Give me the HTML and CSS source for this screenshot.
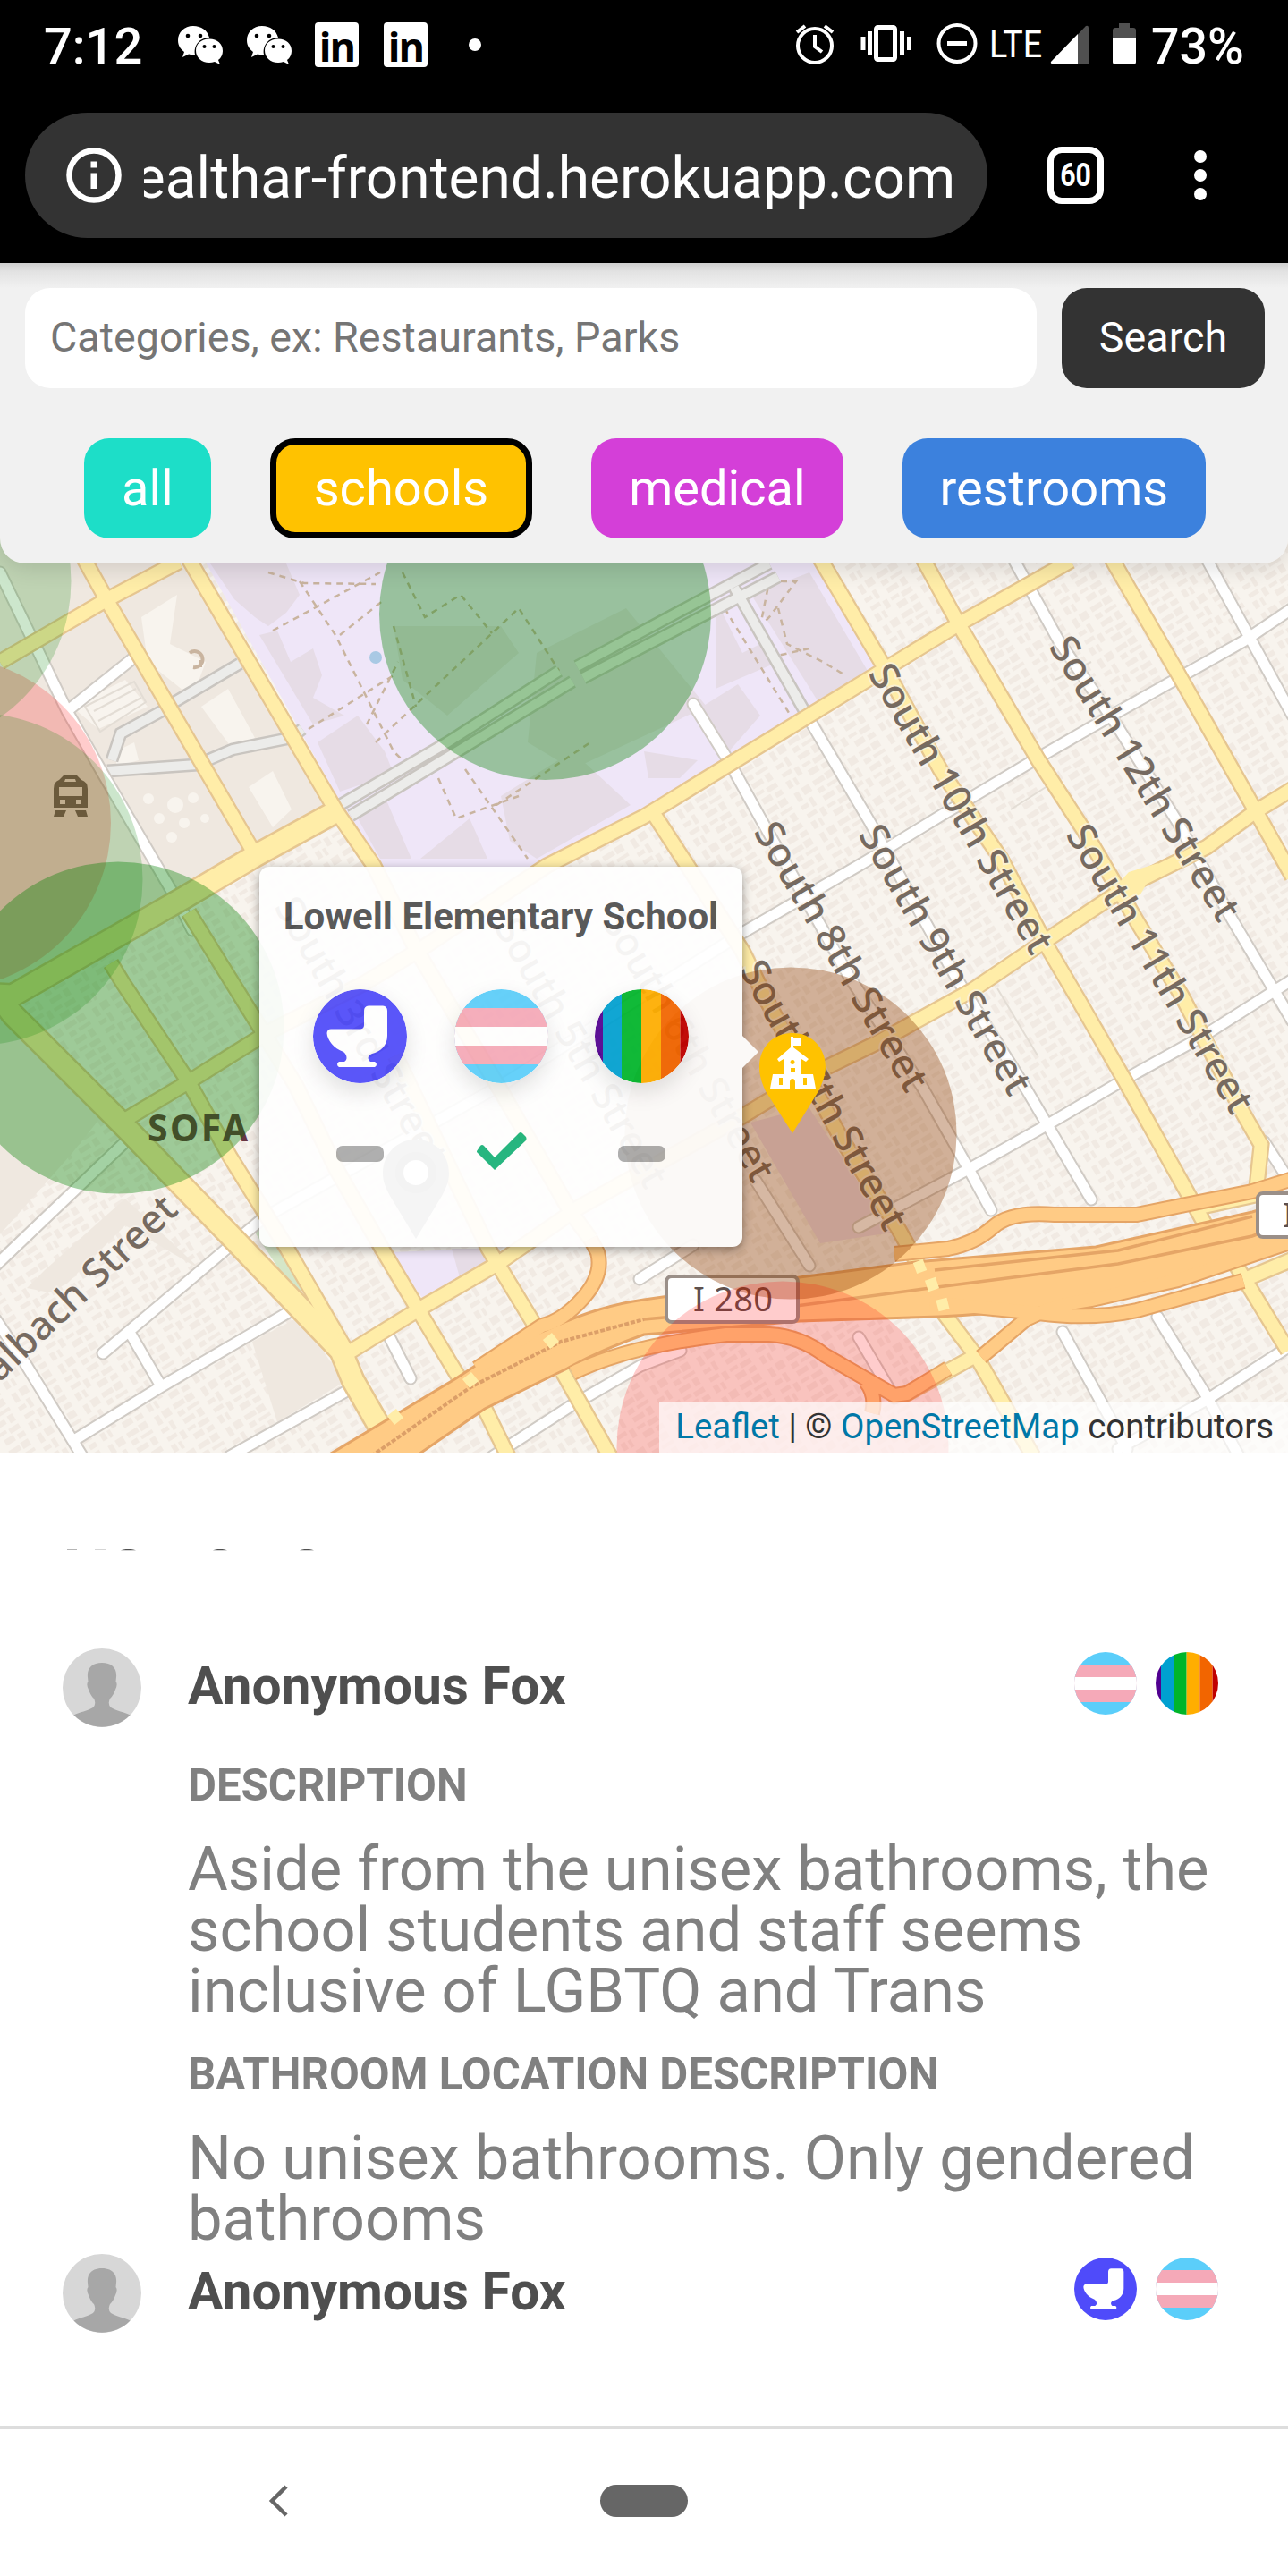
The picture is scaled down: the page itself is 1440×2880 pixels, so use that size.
FILE: index.html
```html
<!DOCTYPE html>
<html lang="en">
<head>
<meta charset="utf-8">
<title>Map of inclusive places</title>
<link rel="stylesheet" href="styles.css">
</head>
<body>
<svg class="defs" width="0" height="0" aria-hidden="true">
  <defs>
    <clipPath id="disc"><circle cx="52.5" cy="52.5" r="52.5"/></clipPath>
    <symbol id="toilet" viewBox="0 0 105 105">
      <circle cx="52.5" cy="52.5" r="52.5" fill="#4f4bfa"/>
      <path fill="#fff" d="M62 18.500H78Q83 19 83 24V52C83 63 75 70 66 72C60 74 61 79 64 81H69Q71 82 71 84T69 87H29Q27 86 27 84T29 81H35C39 79 38 73 34 70C23 66 16 57 15.500 49Q16 44.500 20 44.500H53Q57 44 57 40V24Q57 19 62 18.500Z"/>
    </symbol>
    <symbol id="trans" viewBox="0 0 105 105">
      <g clip-path="url(#disc)"><path fill="#5bcefa" d="M0 0H105V105H0Z"/><path fill="#f5a9b8" d="M0 21H105V84H0Z"/><path fill="#fff" d="M0 42H105V63H0Z"/></g>
    </symbol>
    <symbol id="rainbow" viewBox="0 0 105 105">
      <g clip-path="url(#disc)"><path fill="#510090" d="M0 0H9V105H0Z"/><path fill="#00a0d0" d="M9 0H30V105H9Z"/><path fill="#00b52a" d="M30 0H52V105H30Z"/><path fill="#ffae00" d="M52 0H74V105H52Z"/><path fill="#f26500" d="M74 0H95.500V105H74Z"/><path fill="#c00000" d="M95.500 0H105V105H95.500Z"/></g>
    </symbol>
    <symbol id="person" viewBox="0 0 88 88">
      <circle cx="44" cy="44" r="44" fill="#d7d7d7"/>
      <path fill="#a7a7a7" d="M44 16C55 16 61 22 60 32L59.500 37Q62 40 59 46C57 51 56 53 53 56Q50 62 54 66C60 70 69 71 75.500 74.500A44 44 0 0 1 12.500 74.500C19 71 28 70 34 66Q38 62 35 56C32 53 31 51 29 46Q26 40 28.500 37L28 32C27 22 33 16 44 16Z"/>
    </symbol>
    <symbol id="wechat" viewBox="0 0 52 44">
      <path fill="#fff" d="M18 1C8 1 1 8 1 17C1 23 4 27 8 30L6 36L13 32.500Q16 33.500 20 33C18 22 26 14 36 14C34 6 27 1 18 1Z"/>
      <path fill="#fff" d="M36 15.500C27 15.500 21 21 21 28.500S27 42 36 42Q39 42 42 41L48 44L46 39C49 37 51 33 51 29C51 21 45 15.500 36 15.500Z"/>
      <g fill="#000"><circle cx="12" cy="12" r="2.300"/><circle cx="26" cy="12" r="2.300"/><circle cx="30.500" cy="24" r="2"/><circle cx="41.500" cy="24" r="2"/></g>
    </symbol>
  </defs>
</svg>

<header class="status">
  <div class="status-left">
    <span class="clock">7:12</span>
    <svg class="wechat" width="52" height="44"><use href="#wechat"/></svg>
    <svg class="wechat" width="52" height="44"><use href="#wechat"/></svg>
    <span class="linkedin">in</span>
    <span class="linkedin">in</span>
    <span class="dot"></span>
  </div>
  <svg class="status-right" viewBox="880 0 560 98" width="560" height="98">
    <g fill="none" stroke="#fff" stroke-width="4">
      <circle cx="911" cy="51" r="19"/><path d="M911 39V52L919 58M891 36L900 29M931 36L922 29"/>
      <rect x="979.500" y="30.500" width="21" height="36" rx="2" stroke-width="5"/>
      <path d="M972.500 35V62M1008.500 35V62M965 41V56M1016.500 41V56" stroke-width="5"/>
      <circle cx="1070" cy="48.500" r="20.500"/><path d="M1059 48.500H1081" stroke-width="5"/>
    </g>
    <text x="1106" y="64" class="lte" textLength="59" lengthAdjust="spacingAndGlyphs">LTE</text>
    <path fill="#505050" d="M1175 70L1214 29Q1217 28 1217 31V71H1177Z"/>
    <path fill="#fff" d="M1175 69L1205 38V71H1177Q1174 71 1175 69Z"/>
    <path fill="#505050" d="M1251 26H1263V31H1267Q1270 31 1270 34V43H1244V34Q1244 31 1247 31H1251Z"/>
    <path fill="#fff" d="M1244 42H1270V69Q1270 72 1267 72H1247Q1244 72 1244 69Z"/>
    <text x="1287" y="71" class="percent" textLength="104" lengthAdjust="spacingAndGlyphs">73%</text>
  </svg>
</header>

<nav class="toolbar">
  <div class="address">
    <svg width="62" height="62" viewBox="0 0 62 62"><circle cx="31" cy="31" r="27.500" fill="none" stroke="#fff" stroke-width="6.500"/><path fill="#fff" d="M27.500 15.500H34.500V22.500H27.500ZM27.500 28.500H34.500V46H27.500Z"/></svg>
    <div class="url"><span>ealthar-frontend.herokuapp.com</span></div>
  </div>
  <div class="tabs"><span>60</span></div>
  <div class="more"><i></i><i></i><i></i></div>
</nav>

<main class="stage">
  <svg class="map" viewBox="0 294 1440 1330" width="1440" height="1330">
    <defs>
      <pattern id="houses" width="61" height="53" patternUnits="userSpaceOnUse" patternTransform="rotate(-32)">
        <path fill="#f1eae3" d="M2 3H16V9H2ZM18 2H28V10H18ZM2 13H10V19H2ZM14 14H29V18H14ZM3 23H17V29H3ZM21 22H28V31H21ZM2 34H12V38H2ZM15 35H28V41H15ZM4 43H16V50H4ZM20 45H29V51H20ZM38 4H44V15H38ZM48 3H58V12H48ZM37 20H46V25H37ZM49 17H54V28H49ZM38 31H50V36H38ZM53 33H59V43H53ZM37 41H43V50H37ZM46 42H50V51H46Z"/>
      </pattern>
      <g id="yellow" fill="none">
        <path d="M94 625L120 672L282 950M211 625L376 907L418 968L466 1063L562 1223L638 1355L660 1385M0 740L120 670L200 628"/>
        <path d="M138 1253L207 1212L298 1155L406 1100L472 1060L611 968L720 913L986 750L1073 697L1197 627"/>
        <path d="M124 1077L138 1100L211 1210L257 1293L321 1396L390 1515M211 1020L271 1117L331 1214L376 1307L427 1396L468 1465L519 1550"/>
        <path d="M442 1180L546 1396L606 1495M390 1512L473 1461L556 1413L647 1350L830 1248L904 1203L982 1165L1087 1107L1161 1057L1262 990L1349 947L1404 907L1445 882"/>
        <path d="M917 625L991 750L1051 860L1119 960L1170 1057L1207 1120L1257 1207L1349 1372M1381 1413L1440 1510"/>
        <path d="M1032 625L1073 700L1161 850L1211 927L1271 1030L1321 1113L1390 1245L1410 1280L1404 1336L1340 1350M1243 625L1317 753L1404 907L1445 980"/>
        <path d="M729 907L770 970L830 1063L858 1120L940 1272L1005 1375L1030 1420M1055 1468L1092 1517L1155 1628M1014 1558L1092 1515M629 1534L682 1628M542 1575L568 1628M1445 1408L1390 1431"/>
      </g>
      <g id="wide" fill="none"><path d="M-5 1112L14 1113L207 1003L285 957L380 905M0 1115L14 1134L138 1258L262 1386L381 1510L395 1544L443 1628"/></g>
      <g id="white" fill="none">
        <path d="M775 787L816 853L853 920L950 1093L1032 1217L1083 1307L1108 1353M904 803L973 920L1069 1093L1147 1217L1220 1341M1133 625L1184 717L1248 810L1317 920L1377 1027L1445 1142M1349 625L1445 800"/>
        <path d="M1445 680L1390 717L1248 797L1161 847L1055 910L968 963L830 1043L566 1210L294 1362L257 1393L115 1513M-5 1415L147 1270M147 1493L179 1548M83 1610L179 1551L326 1465M257 1628L395 1551M-5 1475L28 1524L92 1628M436 1496L459 1541M551 1628L638 1572L716 1527L761 1510M715 1430L775 1392"/>
        <path d="M960 1372L1000 1351L1083 1307L1170 1258L1257 1207L1344 1159L1445 1095M1188 1489L1260 1620M1294 1472L1349 1561L1385 1628M1445 1503L1349 1565L1250 1620M1413 1276L1440 1318M960 1495L1000 1563M845 1320L905 1415"/>
        <path d="M0 640L75 795L115 865L200 1010L215 1040M75 795L150 735"/>
      </g>
      <g id="grey" fill="none"><path d="M821 657L904 803M380 900L500 830L625 750M392 912L520 835L640 762M645 745L860 630M652 758L870 645M195 785L268 742M125 850L135 820L190 790M120 862L220 855L260 838L325 825L338 815"/></g>
      <g id="ramps" fill="none">
        <path d="M660 1385L668 1400Q675 1425 652 1451T606 1482L533 1530M1000 1402L1060 1396Q1090 1390 1110 1372T1179 1358H1271L1340 1344L1400 1332L1445 1318M1040 1456L1161 1468Q1220 1476 1271 1465L1390 1432M1097 1517L1147 1475Q1180 1458 1220 1453L1317 1431L1445 1388"/>
        <path d="M640 1535Q700 1505 812 1492H860Q895 1494 922 1515L1000 1560L1014 1558L1060 1530M968 1545Q980 1560 975 1580"/>
      </g>
    </defs>
    <rect y="294" width="1440" height="1330" fill="#f8f4ee"/>
    <rect y="294" width="1440" height="1330" fill="url(#houses)"/>
    <path fill="#efe8e0" d="M0 600H205L372 900L285 950L207 1003L0 1110ZM0 1120L120 1240L80 1290L0 1380ZM225 1420L140 1340L50 1420L30 1440L55 1445L75 1435L140 1370ZM282 1500L335 1472L385 1545L310 1590Z"/>
    <path fill="#f8f4ee" d="M158 690L198 665L190 720L230 740L215 780L165 740ZM225 790L255 770L285 825L262 840ZM278 880L305 862L326 905L305 925ZM80 790L140 760L165 790L110 815ZM130 840L150 830L155 850L130 857Z"/>
    <g fill="none" stroke="#e3ddd5" stroke-width="2"><path d="M95 790L150 762L163 785L112 818ZM105 795L152 770M110 806L158 780M1180 760L1220 740M1130 905L1185 870M1115 1105L1160 1180"/></g>
    <g fill="#f8f4ee"><circle cx="166" cy="893" r="6"/><circle cx="196" cy="900" r="9"/><circle cx="216" cy="892" r="6"/><circle cx="178" cy="915" r="6"/><circle cx="206" cy="920" r="6"/><circle cx="192" cy="936" r="6"/><circle cx="229" cy="915" r="5"/></g>
    <path fill="#efe6f8" d="M225 620L385 905L425 975H600L725 902L985 742L915 620ZM435 1400L545 1396L550 1410L475 1455Z"/>
    <path fill="#e6dce6" d="M235 630H320L335 665L320 685L300 700L285 690L262 670ZM290 710L310 705L325 740L350 725L360 755L350 780L385 800L350 810ZM355 830L400 800L430 840L440 865L380 885ZM440 700H560L580 730L500 800L450 760ZM600 730L700 680L790 790L640 860L590 830ZM560 890L640 840L705 900L600 960L570 940ZM400 915L430 890L460 960H425ZM800 670L830 730L850 720L870 740L800 770ZM840 665L905 640L970 750L915 785ZM785 790L825 765L850 800L815 840ZM720 840L780 850L760 870H725ZM470 960L525 915L545 960ZM505 1396H545L550 1410L515 1432Z"/>
    <path fill="#eadce8" d="M839 1255L904 1238L997 1378L917 1390Z"/>
    <path fill="none" stroke="#c9b49f" stroke-width="2.500" stroke-dasharray="7 6" d="M300 640L340 652L420 653M335 650L375 710L440 840L450 850M305 705L425 640M380 710L430 670M345 815L440 755M410 810L445 740M450 640L475 690L515 665L550 708M440 700L465 790M420 830L580 680L625 750M520 860L590 960M555 900L660 830M490 870L510 915L580 890M860 650L890 650L860 690L850 700ZM870 680L880 720L920 740L945 755M810 680L890 810M860 735L905 725"/>
    <circle cx="420" cy="735" r="7" fill="#a9c9e4"/>
    <path fill="none" stroke="#c9b49f" stroke-width="4" d="M212 730A9 9 0 1 1 216 746M224 738V746"/>
    <path fill="#d5e6c8" d="M280 1370L345 1470L322 1395L292 1360Z"/>

    <use href="#grey" stroke="#c9c5c0" stroke-width="15"/><use href="#grey" stroke="#ececea" stroke-width="10"/>
    <use href="#white" stroke="#d0cbc5" stroke-width="15" stroke-linecap="round"/><use href="#white" stroke="#fff" stroke-width="11" stroke-linecap="round"/>
    <use href="#yellow" stroke="#e6c690" stroke-width="19"/><use href="#wide" stroke="#e6c690" stroke-width="28"/>
    <use href="#yellow" stroke="#ffeda8" stroke-width="14.500"/><use href="#wide" stroke="#ffeda8" stroke-width="23"/>
    <path fill="#ffeda8" d="M1250 988L1262 975L1295 965L1275 1000L1258 1006Z"/>
    <use href="#ramps" stroke="#e5a566" stroke-width="18"/>
    <path fill="#ffcb85" stroke="#e5a566" stroke-width="3" d="M365 1628L510 1541L560 1508L620 1483Q670 1460 720 1453L894 1428L1023 1411L1225 1394L1400 1355L1445 1341V1385L1271 1444Q1170 1466 1050 1472L894 1477L720 1492Q670 1510 634 1530L542 1575L465 1628Z"/>
    <use href="#ramps" stroke="#ffcb85" stroke-width="14"/>
    <path fill="none" stroke="#dc9f68" stroke-width="4" stroke-dasharray="5 2" d="M415 1628L526 1551L627 1500L720 1475"/>
    <path fill="none" stroke="#e5a566" stroke-width="3.500" d="M720 1475L890 1460L1040 1440L1250 1413L1400 1382L1445 1365M1045 1420L1250 1398L1400 1360"/>
    <path stroke="#ffeda8" stroke-width="13" d="M437 1588L447 1580M521 1547L531 1539M611 1503L621 1495M1023 1418L1034 1414M1036 1438L1048 1434M1048 1460L1060 1457"/>

    <g class="street">
      <text transform="translate(970 753) rotate(59.900)" textLength="366">South 10th Street</text>
      <text transform="translate(842 930) rotate(59.700)" textLength="340">South 8th Street</text>
      <text transform="translate(959 933) rotate(60)" textLength="340">South 9th Street</text>
      <text transform="translate(1191 933) rotate(59.400)" textLength="366">South 11th Street</text>
      <text transform="translate(1172 723) rotate(58.400)" textLength="364">South 12th Street</text>
      <text transform="translate(826 1084) rotate(61)" textLength="337">South 7th Street</text>
      <text transform="translate(672 1030) rotate(60)" textLength="340">South 6th Street</text>
      <text transform="translate(552 1037) rotate(60)" textLength="340">South 5th Street</text>
      <text transform="translate(306 1014) rotate(60)" textLength="340">South 3rd Street</text>
      <text transform="translate(201 1355) rotate(-43.500)" text-anchor="end" textLength="307">Balbach Street</text>
    </g>
    <text x="165" y="1276" class="place" textLength="112">SOFA</text>
    <g stroke="#9a8f88" stroke-width="4" fill="#fff"><rect x="745" y="1427" width="147" height="51" rx="6"/><rect x="1406" y="1334" width="60" height="49" rx="6"/></g>
    <text x="775" y="1466" class="shield" textLength="89">I 280</text><text x="1434" y="1372" class="shield">I</text>

    <circle cx="-61.500" cy="920" r="185.500" fill="#f00" fill-opacity=".2"/>
    <g fill="#008000" fill-opacity=".2">
      <circle cx="-106" cy="650" r="185.500"/><circle cx="-26" cy="983" r="185.500"/><circle cx="884" cy="1267" r="185.500"/>
    </g>
    <g fill="#008000" fill-opacity=".36"><circle cx="609.500" cy="686.500" r="185.500"/><circle cx="132" cy="1149" r="185.500"/></g>
    <g fill="#f00" fill-opacity=".2"><circle cx="884" cy="1267" r="185.500"/><circle cx="875" cy="1618" r="185.500"/></g>
    <path fill="#6b5a3c" fill-rule="evenodd" d="M71 867H86L91 872Q98 874 98 882V903H60V882Q60 874 66 872ZM73 871L72 874H85L84 871ZM66 880V890H92V880ZM67 894V899H73V894ZM85 894V899H91V894ZM62 906H74L71 913H60ZM84 906H96L98 913H87Z"/>

    <path fill="#777" d="M465 1274C444 1274 428 1290 428 1312C428 1322 432 1329 436 1337L465 1385L494 1337C498 1329 502 1322 502 1312C502 1290 486 1274 465 1274Z"/>
    <circle cx="465" cy="1311" r="18.500" fill="#fff" stroke="#555" stroke-width="9"/>

    <path fill="#ffc200" d="M886 1155C864 1155 849 1171 849 1193C849 1203 852 1211 856 1220L886 1267L915 1220C919 1211 923 1203 923 1193C923 1171 907 1155 886 1155Z"/>
    <path fill="#fff" fill-rule="evenodd" d="M884 1159H887V1161H895V1169H887V1171L904 1184L901 1187L896 1184V1201H909L912 1217H861L864 1201H876V1184L871 1187L869 1184L884 1171ZM886 1185A2.500 2.500 0 1 0 886.100 1185ZM884 1194V1198H889V1194ZM871 1205V1213H875V1205ZM898 1205V1213H902V1205ZM883 1217H889V1210Q889 1206 886 1206T883 1210Z"/>
  </svg>

  <section class="search">
    <div class="search-row">
      <input class="field" type="text" placeholder="Categories, ex: Restaurants, Parks">
      <button class="go">Search</button>
    </div>
    <div class="chips">
      <button class="chip teal">all</button>
      <button class="chip amber">schools</button>
      <button class="chip magenta">medical</button>
      <button class="chip blue">restrooms</button>
    </div>
  </section>

  <aside class="popup">
    <h2>Lowell Elementary School</h2>
    <div class="ratings">
      <svg class="badge" viewBox="0 0 105 105"><use href="#toilet"/></svg>
      <svg class="badge" viewBox="0 0 105 105"><use href="#trans"/></svg>
      <svg class="badge" viewBox="0 0 105 105"><use href="#rainbow"/></svg>
      <span class="dash"></span>
      <svg class="check" width="57" height="43" viewBox="0 0 57 43"><path fill="#18b278" d="M1 22L5 16Q7 14 9 16L21 29L48 2Q50 0 52 2L56 6Q57 8 56 10L21 43L1 23Z"/></svg>
      <span class="dash"></span>
    </div>
  </aside>
  <div class="credit"><a>Leaflet</a> | © <a>OpenStreetMap</a> contributors</div>
</main>

<section class="reviews">
  <svg class="clipped" width="290" height="2" viewBox="0 0 290 2"><path fill="#b5b5b5" d="M5 0H16V1H5Z"/><path fill="#d5d5d5" d="M36 0H48V1H36Z"/><path fill="#505050" d="M65 1.200Q73.500 -1.500 82 1.200ZM168 1.200Q176 -1.500 184 1.200ZM265 1.200Q273 -1.500 281 1.200Z"/></svg>
  <article class="review">
    <svg class="avatar" viewBox="0 0 88 88"><use href="#person"/></svg>
    <div class="body">
      <div class="head"><h3>Anonymous Fox</h3><div class="tags"><svg viewBox="0 0 105 105"><use href="#trans"/></svg><svg viewBox="0 0 105 105"><use href="#rainbow"/></svg></div></div>
      <h4>DESCRIPTION</h4>
      <p>Aside from the unisex bathrooms, the school students and staff seems inclusive of LGBTQ and Trans</p>
      <h4 class="next">BATHROOM LOCATION DESCRIPTION</h4>
      <p>No unisex bathrooms. Only gendered bathrooms</p>
    </div>
  </article>
  <article class="review">
    <svg class="avatar" viewBox="0 0 88 88"><use href="#person"/></svg>
    <div class="body">
      <div class="head"><h3>Anonymous Fox</h3><div class="tags"><svg viewBox="0 0 105 105"><use href="#toilet"/></svg><svg viewBox="0 0 105 105"><use href="#trans"/></svg></div></div>
    </div>
  </article>
</section>

<footer class="navbar">
  <svg width="24" height="36" viewBox="0 0 24 36"><path fill="none" stroke="#666" stroke-width="4.500" d="M21 2L5 18L21 34"/></svg>
  <span class="home"></span>
</footer>
</body>
</html>
```
FILE: styles.css
```css
* { box-sizing: border-box; }
body { margin: 0; width: 1440px; height: 2880px; overflow: hidden; display: flex; flex-direction: column; background: #fff; font-family: Roboto, "Liberation Sans", sans-serif; }
h2, h3, h4, p { margin: 0; }
svg { display: block; flex: none; }
.defs { position: absolute; }

.status { height: 98px; flex: none; display: flex; justify-content: space-between; background: #000; color: #fff; }
.status-left { display: flex; align-items: center; padding-left: 49px; height: 100px; }
.clock { font-size: 56px; font-weight: 500; width: 149px; line-height: 60px; padding-top: 3px; }
.wechat { margin-right: 25px; }
.linkedin { width: 49px; height: 50px; margin-right: 28px; border-radius: 4px; background: #fff; color: #000; font: 700 45px/54px "Open Sans", sans-serif; letter-spacing: -2px; text-align: center; }
.dot { width: 14px; height: 14px; margin-left: 18px; border-radius: 50%; background: #fff; }
.lte { font: 400 43px Roboto, sans-serif; fill: #fff; }
.percent { font: 500 56px Roboto, sans-serif; fill: #fff; }

.toolbar { height: 196px; flex: none; display: flex; align-items: center; padding: 0 91px 0 28px; background: #000; }
.address { width: 1076px; height: 140px; display: flex; align-items: center; padding-left: 46px; border-radius: 70px; background: #333; }
.url { width: 907px; margin-left: 25px; overflow: hidden; display: flex; justify-content: flex-end; color: #fff; font-size: 64px; line-height: 90px; white-space: nowrap; padding-top: 8px; }
.tabs { width: 63px; height: 64px; margin-left: 67px; border: 7px solid #fff; border-radius: 16px; color: #fff; font: 700 36px/51px Roboto, sans-serif; text-align: center; }
.tabs span { display: block; transform: scaleX(.84); }
.more { margin-left: auto; display: grid; gap: 7px; }
.more i { width: 14px; height: 14px; border-radius: 50%; background: #fff; }

.stage { position: relative; height: 1330px; flex: none; overflow: hidden; }
.search { position: absolute; inset: 0 0 auto; height: 336px; padding: 28px 26px 28px 28px; border-radius: 0 0 28px 28px; background: linear-gradient(#cfcfcf, #e2e2e2 9px, #f1f1f1 28px); box-shadow: 0 4px 28px rgba(0, 0, 0, .14); }
.search-row { display: flex; gap: 28px; height: 112px; }
.field { flex: 1; border: 0; border-radius: 28px; padding: 0 28px 2px; font: 46.67px Roboto, sans-serif; background: #fff; }
.field::placeholder { color: #757575; }
.go { width: 227px; border: 0; border-radius: 28px; padding-bottom: 3px; background: #333; color: #fff; font: 46.67px Roboto, sans-serif; }
.chips { display: flex; gap: 66px; margin: 56px 0 0 66px; }
.chip { height: 112px; padding: 0 42px; border: 0; border-radius: 28px; color: #fff; font: 56px Roboto, sans-serif; }
.teal { background: #1ddec8; }
.amber { background: #ffc200; border: 7px solid #000; }
.magenta { background: #d43fd8; }
.blue { background: #3c81dd; }

.popup { position: absolute; left: 290px; top: 675px; width: 540px; height: 425px; border-radius: 11px; background: #fff; opacity: .93; box-shadow: 0 3px 11px rgba(0, 0, 0, .4); }
.popup::after { content: ""; position: absolute; left: 100%; top: 189px; border: 18px solid transparent; border-left-color: #fff; border-right: 0; }
.popup h2 { margin-top: 31px; color: #4f4f4f; font-size: 42px; line-height: 50px; text-align: center; white-space: nowrap; }
.ratings { display: grid; grid-template-columns: repeat(3, 105px); justify-content: center; column-gap: 52.5px; row-gap: 54px; margin-top: 56px; align-items: center; justify-items: center; }
.badge { width: 105px; height: 105px; border-radius: 50%; box-shadow: 0 10px 24px rgba(0, 0, 0, .13); }
.dash { width: 53px; height: 18px; margin-top: 7px; border-radius: 7px; background: #aaa; }
.credit { position: absolute; right: 0; bottom: 0; height: 57px; padding: 0 16px 0 18px; background: rgba(255, 255, 255, .7); color: #333; font-size: 38.4px; line-height: 56px; white-space: nowrap; }
.credit a { color: #0078a8; }
.street { font: 500 44px "Noto Sans", sans-serif; fill: #766a60; paint-order: stroke; stroke: rgba(248, 244, 238, .6); stroke-width: 4px; }
.place { font: 700 41px "Noto Sans", sans-serif; fill: #683541; }
.shield { font: 38px "Noto Sans", sans-serif; fill: #5e504d; }

.reviews { height: 1088px; flex: none; padding: 108px 78px 0 70px; }
.clipped { margin-bottom: 109px; }
.review { display: flex; gap: 52px; }
.review + .review { margin-top: 5px; }
.avatar { width: 88px; height: 88px; }
.body { flex: 1; }
.head { display: flex; justify-content: space-between; height: 88px; }
.head h3 { color: #4f4f4f; font-size: 58.7px; line-height: 85px; }
.tags { display: flex; gap: 21px; padding-top: 4px; }
.tags svg { width: 70px; height: 70px; }
.body h4 { margin: 33px 0 28px; color: #808080; font-size: 49.1px; line-height: 64px; white-space: nowrap; }
.body .next { margin: 26px 0 28px; }
.body p { color: #808080; font-size: 68.7px; line-height: 68.200px; }

.navbar { height: 168px; flex: none; border-top: 4px solid #ddd; display: flex; align-items: center; padding: 0 0 4px 299px; }
.home { width: 98px; height: 36px; margin-left: 348px; border-radius: 18px; background: #666; }
```
